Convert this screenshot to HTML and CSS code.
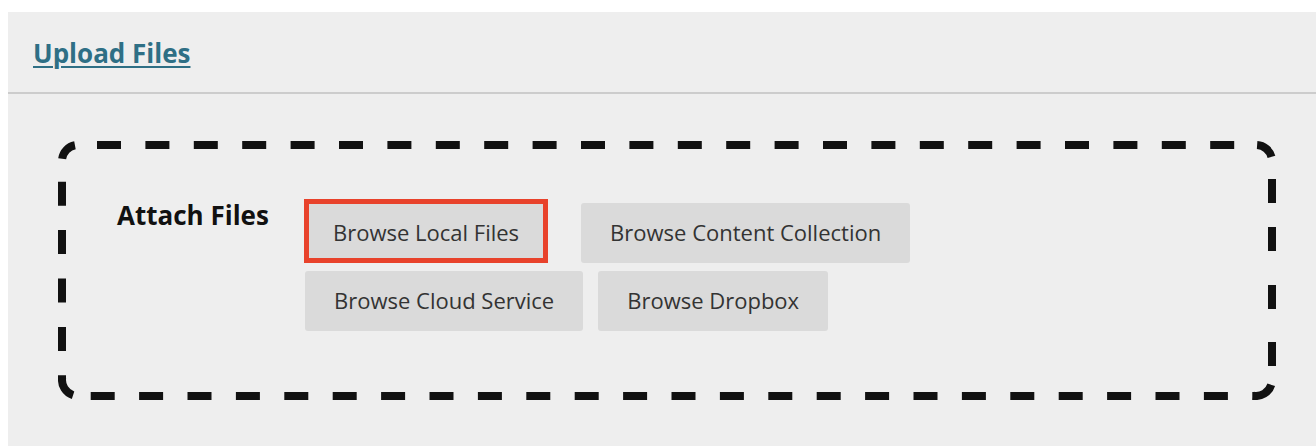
FILE: index.html
```html
<!DOCTYPE html>
<html lang="en">
<head>
<meta charset="utf-8">
<title>Upload Files</title>
<link rel="stylesheet" href="styles.css">
</head>
<body>
  <section class="panel">
    <header class="panel-header">
      <h2 class="panel-title"><a href="#">Upload Files</a></h2>
    </header>
    <div class="panel-body">
      <div class="dropzone">
        <!-- dashed drop outline: straight sides plus one arc piece per corner -->
        <svg class="dropzone-outline" width="1218" height="259" viewBox="0 0 1218 259" aria-hidden="true">
          <g fill="none" stroke="#111111" stroke-width="8">
            <path class="side-top" d="M20 4 H1198"/>
            <path class="side-bottom" d="M20 255 H1198"/>
            <path class="side-left" d="M4 20 V239"/>
            <path class="side-right" d="M1214 20 V239"/>
            <path d="M4.16 17.77 A16 16 0 0 1 16.95 4.29"/>
            <path d="M1199.12 4.04 A16 16 0 0 1 1213.45 15.86"/>
            <path d="M1213.26 243.81 A16 16 0 0 1 1195.22 254.76"/>
            <path d="M15.06 254.22 A16 16 0 0 1 4.16 236.77"/>
          </g>
        </svg>
        <div class="attach-label">Attach Files</div>
        <div class="browse-group">
          <div class="browse-row">
            <button class="browse-btn is-highlighted" type="button">Browse Local Files</button>
            <button class="browse-btn" type="button">Browse Content Collection</button>
          </div>
          <div class="browse-row">
            <button class="browse-btn" type="button">Browse Cloud Service</button>
            <button class="browse-btn" type="button">Browse Dropbox</button>
          </div>
        </div>
      </div>
    </div>
  </section>
</body>
</html>
```
FILE: styles.css
```css
* {
  box-sizing: border-box;
}

html, body {
  height: 100%;
}

body {
  margin: 0;
  padding: 12px 0 0 8px;
  background: #ffffff;
  font-family: "Open Sans", "Liberation Sans", sans-serif;
  overflow: hidden;
}

.panel {
  background: #eeeeee;
  height: 100%;
}

.panel-header {
  height: 82px;
  padding: 23px 0 0 25px;
  border-bottom: 2px solid #cccccc;
}

.panel-title {
  margin: 0;
  font-size: 26px;
  font-weight: 700;
  line-height: 36px;
}

.panel-title a {
  color: #2e6f85;
  text-decoration: underline;
  text-decoration-thickness: 2px;
  text-underline-offset: 3px;
}

.panel-body {
  padding: 47px 40px 0 50px;
}

.dropzone {
  position: relative;
  width: 1218px;
  height: 259px;
  display: flex;
  align-items: flex-start;
  padding: 58px 0 0 59px;
}

.dropzone-outline {
  position: absolute;
  left: 0;
  top: 0;
  pointer-events: none;
}

.side-top {
  stroke-dasharray: 24 24.4;
  stroke-dashoffset: 29.4;
}

.side-bottom {
  stroke-dasharray: 24 24.4;
  stroke-dashoffset: 35.7;
}

.side-left {
  stroke-dasharray: 24 24.4;
  stroke-dashoffset: 27.7;
}

.side-right {
  stroke-dasharray: 0 18 24 24 24 34 24 33 24 200;
}

.attach-label {
  flex: none;
  width: 188px;
  margin-top: -2px;
  font-size: 26px;
  font-weight: 700;
  color: #111111;
  line-height: 36px;
}

.browse-group {
  display: flex;
  flex-direction: column;
  gap: 8px;
}

.browse-row {
  display: flex;
  align-items: flex-end;
  gap: 15px;
}

.browse-btn {
  height: 60px;
  padding: 0 29px 2px;
  border: 0;
  border-radius: 3px;
  background: #dadada;
  color: #333333;
  font-family: inherit;
  font-size: 22px;
  line-height: 30px;
  cursor: pointer;
}

.browse-btn.is-highlighted {
  height: 64px;
  padding: 4px 24px 2px;
  border: 5px solid #e8422b;
  border-radius: 0;
  margin-left: -1px;
  margin-right: 18px;
}
```
